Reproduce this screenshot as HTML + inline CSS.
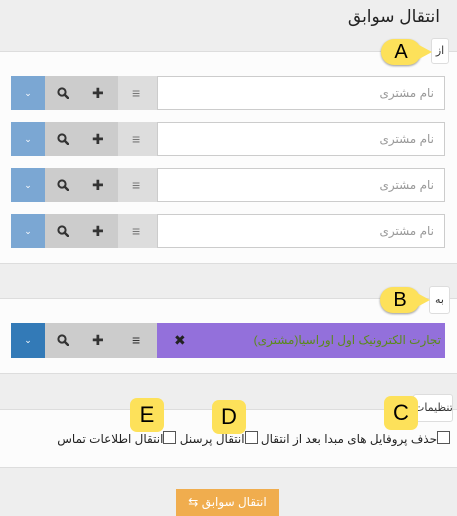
<!DOCTYPE html>
<html><head><meta charset="utf-8"><style>
body{margin:0;width:457px;height:516px;background:#eee;font-family:"Liberation Sans","DejaVu Sans",sans-serif;position:relative;overflow:hidden}
.a{position:absolute}
.panel{position:absolute;left:0;width:457px;background:#fcfcfc;border-top:1px solid #ddd;border-bottom:1px solid #ddd}
.lbl{position:absolute;background:#fff;border:1px solid #ddd;border-radius:3px;font-size:11px;color:#333;text-align:center}
.row{position:absolute;left:11px;width:434px;height:34px}
.dd{position:absolute;left:0;top:0;width:34px;height:34px;background:#7ba7d3;color:#fff;font-size:9px;text-align:center;line-height:34px}
.bt{position:absolute;left:34px;top:0;width:73px;height:34px;background:#ccc}
.ls{position:absolute;left:107px;top:0;width:39px;height:34px;background:#ddd}
.inp{position:absolute;left:146px;top:0;width:286px;height:32px;background:#fff;border:1px solid #ccc;font-size:12px;color:#999;text-align:right;line-height:32px}
.inp span{margin-right:10px}
.ic{position:absolute;top:0;line-height:34px;font-weight:bold;font-size:14px;color:#333}
.srch{position:absolute;left:12px;top:11px}
.bub{position:absolute;width:40px;height:26px;background:#fde15a;border-radius:13px;box-shadow:0 1px 2px rgba(0,0,0,.4);font-size:20px;text-align:center;line-height:26px;color:#000}
.sq{position:absolute;width:34px;height:34px;background:#fde15a;border-radius:7px;font-size:22px;text-align:center;line-height:34px;color:#000}
.cb{display:inline-block;width:11px;height:11px;border:1px solid #555;background:#fff;vertical-align:-1px}
</style></head><body>
<div class="a" style="right:17px;top:7px;font-size:17px;color:#222">انتقال سوابق</div>
<div class="panel" style="top:51px;height:211px"></div>
<div class="panel" style="top:298px;height:74px"></div>
<div class="panel" style="top:409px;height:57px"></div>

<div class="lbl" style="left:431px;top:38px;width:16px;height:24px;line-height:24px">از</div>
<div class="bub" style="left:381px;top:39px">A</div>
<div class="a" style="left:419px;top:45px;width:0;height:0;border-left:13px solid #fde15a;border-top:7px solid transparent;border-bottom:7px solid transparent"></div>

<svg width="0" height="0" style="position:absolute"><defs><symbol id="s" viewBox="0 0 12 12"><circle cx="5" cy="5" r="3.6" fill="none" stroke="#333" stroke-width="2"/><path d="M7.6 7.6L11 11" stroke="#333" stroke-width="2.4" stroke-linecap="round"/></symbol></defs></svg>

<div class="row" style="top:76px"><div class="dd">⌄</div><div class="bt"><svg class="srch" width="12" height="12"><use href="#s"/></svg><span class="ic" style="left:47px">✚</span></div><div class="ls"><span class="ic" style="left:14px;color:#777">≡</span></div><div class="inp"><span>نام مشتری</span></div></div>
<div class="row" style="top:122px"><div class="dd">⌄</div><div class="bt"><svg class="srch" width="12" height="12"><use href="#s"/></svg><span class="ic" style="left:47px">✚</span></div><div class="ls"><span class="ic" style="left:14px;color:#777">≡</span></div><div class="inp"><span>نام مشتری</span></div></div>
<div class="row" style="top:168px"><div class="dd">⌄</div><div class="bt"><svg class="srch" width="12" height="12"><use href="#s"/></svg><span class="ic" style="left:47px">✚</span></div><div class="ls"><span class="ic" style="left:14px;color:#777">≡</span></div><div class="inp"><span>نام مشتری</span></div></div>
<div class="row" style="top:214px"><div class="dd">⌄</div><div class="bt"><svg class="srch" width="12" height="12"><use href="#s"/></svg><span class="ic" style="left:47px">✚</span></div><div class="ls"><span class="ic" style="left:14px;color:#777">≡</span></div><div class="inp"><span>نام مشتری</span></div></div>

<div class="lbl" style="left:429px;top:286px;width:19px;height:26px;line-height:26px">به</div>
<div class="bub" style="left:380px;top:287px">B</div>
<div class="a" style="left:417px;top:293px;width:0;height:0;border-left:13px solid #fde15a;border-top:7px solid transparent;border-bottom:7px solid transparent"></div>

<div class="row" style="top:323px;height:35px"><div class="dd" style="background:#337ab7;height:35px">⌄</div><div class="bt" style="height:35px"><svg class="srch" width="12" height="12"><use href="#s"/></svg><span class="ic" style="left:47px">✚</span></div><div class="ls" style="background:#ccc;height:35px"><span class="ic" style="left:14px">≡</span></div><div class="inp" style="background:#9370db;border:none;height:35px;width:288px;line-height:35px;color:#5a8a1a;font-size:12px"><span style="margin-right:4px">تجارت الکترونیک اول اوراسیا(مشتری)</span><span class="ic" style="left:17px;color:#222">✖</span></div></div>

<div class="lbl" style="left:413px;top:394px;width:38px;height:26px;line-height:26px;overflow:hidden">تنظیمات</div>
<div class="sq" style="left:384px;top:396px">C</div>
<div class="sq" style="left:212px;top:400px">D</div>
<div class="sq" style="left:130px;top:398px">E</div>
<div class="a" style="right:7px;top:431px;font-size:12px;color:#222;direction:rtl;white-space:nowrap"><span class="cb"></span>حذف پروفایل های مبدا بعد از انتقال <span class="cb"></span>انتقال پرسنل <span class="cb"></span>انتقال اطلاعات تماس</div>

<div class="a" style="left:176px;top:489px;width:103px;height:27px;background:#f0ad4e;color:#fff;font-size:12px;text-align:center;line-height:27px">⇆ انتقال سوابق</div>
</body></html>
